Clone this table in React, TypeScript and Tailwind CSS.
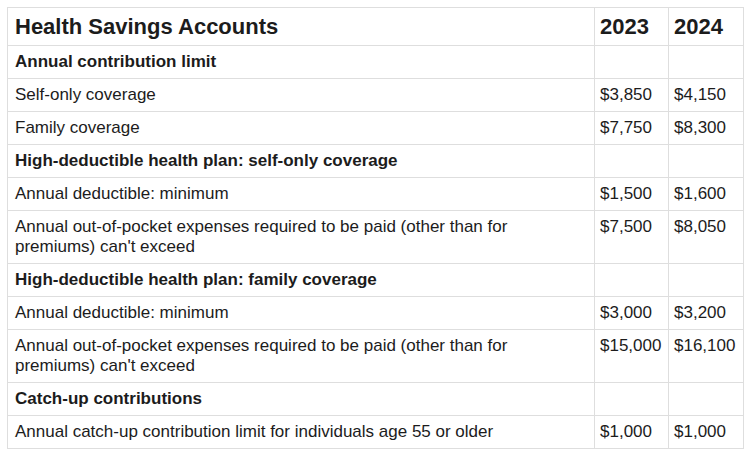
type Row = {
  label: string;
  a?: string;
  b?: string;
  section?: boolean;
};

const rows: Row[] = [
  { label: 'Annual contribution limit', section: true },
  { label: 'Self-only coverage', a: '$3,850', b: '$4,150' },
  { label: 'Family coverage', a: '$7,750', b: '$8,300' },
  { label: 'High-deductible health plan: self-only coverage', section: true },
  { label: 'Annual deductible: minimum', a: '$1,500', b: '$1,600' },
  {
    label: "Annual out-of-pocket expenses required to be paid (other than for premiums) can't exceed",
    a: '$7,500',
    b: '$8,050',
  },
  { label: 'High-deductible health plan: family coverage', section: true },
  { label: 'Annual deductible: minimum', a: '$3,000', b: '$3,200' },
  {
    label: "Annual out-of-pocket expenses required to be paid (other than for premiums) can't exceed",
    a: '$15,000',
    b: '$16,100',
  },
  { label: 'Catch-up contributions', section: true },
  { label: 'Annual catch-up contribution limit for individuals age 55 or older', a: '$1,000', b: '$1,000' },
];

export default function App() {
  return (
    <div className="w-[750px] h-[456px] bg-white p-[7px] font-['Liberation_Sans',Arial,sans-serif] text-[#1c1c1c]">
      <table className="border-collapse table-fixed w-[736px]">
        <colgroup>
          <col className="w-[587px]" />
          <col className="w-[74px]" />
          <col className="w-[75px]" />
        </colgroup>
        <thead>
          <tr>
            <th className="border border-[#dedede] text-left font-bold text-[22px] leading-[25px] pl-[7px] py-[6px]">
              Health Savings Accounts
            </th>
            <th className="border border-[#dedede] text-left font-bold text-[22px] leading-[25px] pl-[5px] py-[6px]">
              2023
            </th>
            <th className="border border-[#dedede] text-left font-bold text-[22px] leading-[25px] pl-[5px] py-[6px]">
              2024
            </th>
          </tr>
        </thead>
        <tbody>
          {rows.map((row, idx) => (
            <tr key={idx}>
              <td
                className={`border border-[#dedede] align-top text-[17px] leading-[20px] pl-[7px] pr-[60px] py-[6px] ${
                  row.section ? 'font-bold' : ''
                }`}
              >
                {row.label}
              </td>
              <td className="border border-[#dedede] align-top text-[17px] leading-[20px] pl-[5px] py-[6px] whitespace-nowrap">
                {row.a}
              </td>
              <td className="border border-[#dedede] align-top text-[17px] leading-[20px] pl-[5px] py-[6px] whitespace-nowrap">
                {row.b}
              </td>
            </tr>
          ))}
        </tbody>
      </table>
    </div>
  );
}
